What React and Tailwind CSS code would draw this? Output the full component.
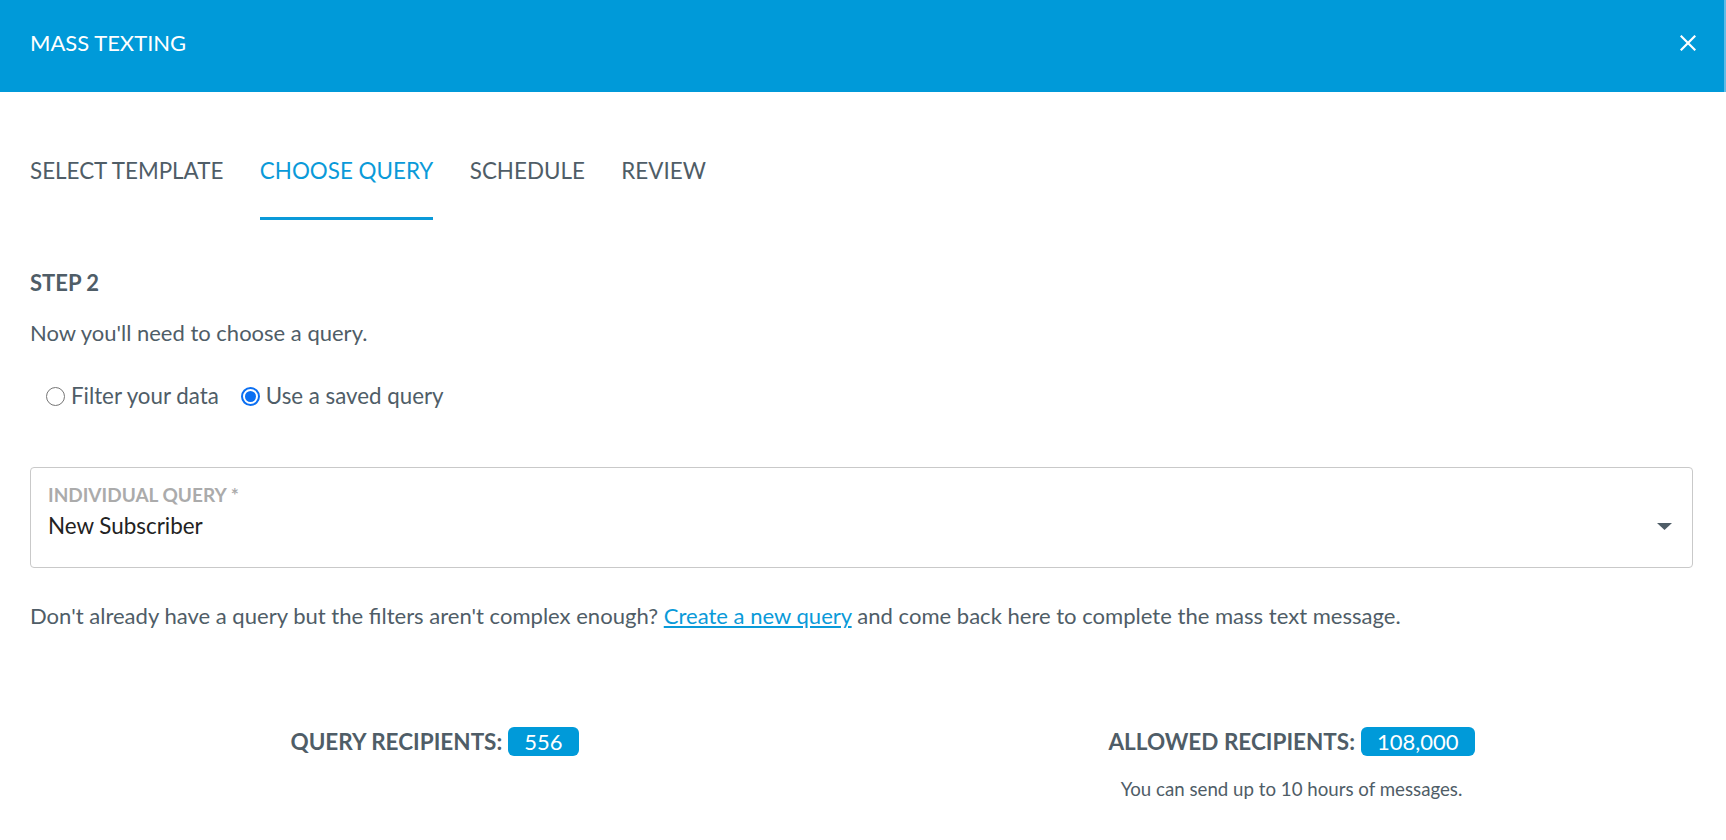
import React from "react";

function Radio({ checked }) {
  if (checked) {
    return (
      <span className="w-[19px] h-[19px] rounded-full border-[2px] border-[#0b6ff2] bg-white flex items-center justify-center shrink-0">
        <span className="w-[11px] h-[11px] rounded-full bg-[#0b6ff2]" />
      </span>
    );
  }
  return <span className="w-[19px] h-[19px] rounded-full border-[1.5px] border-[#767676] bg-white shrink-0" />;
}

function Tab({ label, active }) {
  return (
    <div
      className={
        "text-[22.4px] leading-[22px] pb-[35px] border-b-[3px] " +
        (active ? "text-[#0a9ad9] border-[#0a9ad9]" : "text-[#4f5d67] border-transparent")
      }
    >
      {label}
    </div>
  );
}

function Stat({ label, value, note }) {
  return (
    <div className="flex flex-col items-center">
      <div className="flex items-center gap-[6px]">
        <span className="font-bold text-[22.5px] leading-[29px] text-[#4f5d67]">{label}</span>
        <span className="h-[29px] px-[16px] rounded-[6px] bg-[#009ad9] text-white text-[22px] leading-[29px]">
          {value}
        </span>
      </div>
      {note && <div className="mt-[24px] text-[18.7px] leading-[18px] text-[#4f5d67]">{note}</div>}
    </div>
  );
}

export default function App() {
  return (
    <div className="w-[1726px] h-[840px] bg-white overflow-hidden font-['Lato','Noto_Sans',sans-serif] text-[#4f5d67]">
      {/* Modal header */}
      <div className="h-[92px] bg-[#009ad9] flex items-start justify-between pl-[30px] pr-[28px] border-r-[2px] border-[#5cbce8]">
        <div className="pt-[32px] text-white text-[22px] leading-[22px]">MASS TEXTING</div>
        <button className="mt-[35px] w-[16px] h-[16px] flex items-center justify-center">
          <svg width="16" height="16" viewBox="0 0 16 16">
            <path d="M1.5 1.5L14.5 14.5M14.5 1.5L1.5 14.5" stroke="white" strokeWidth="2.2" strokeLinecap="square" />
          </svg>
        </button>
      </div>

      <div className="px-[30px]">
        {/* Wizard steps */}
        <div className="mt-[68px] flex gap-[36.5px]">
          <Tab label="SELECT TEMPLATE" />
          <Tab label="CHOOSE QUERY" active />
          <Tab label="SCHEDULE" />
          <Tab label="REVIEW" />
        </div>

        <div className="mt-[52px] font-bold text-[22px] leading-[22px]">STEP 2</div>
        <div className="mt-[28px] text-[22px] leading-[22px]">Now you'll need to choose a query.</div>

        <div className="mt-[41px] pl-[16px] flex items-center text-[22.3px] leading-[22px]">
          <Radio />
          <span className="ml-[6px]">Filter your data</span>
          <span className="ml-[22px]">
            <Radio checked />
          </span>
          <span className="ml-[6px]">Use a saved query</span>
        </div>

        {/* Saved query select */}
        <div className="mt-[60px] w-[1663px] h-[101px] border border-[#c9c9c9] rounded-[4px] relative pl-[17px] pt-[17px]">
          <div className="font-bold text-[19px] leading-[19px] text-[#ababab]">INDIVIDUAL QUERY *</div>
          <div className="mt-[11px] text-[22.4px] leading-[22px] text-[#222222]">New Subscriber</div>
          <svg className="absolute right-[20px] top-[55px]" width="15" height="7" viewBox="0 0 15 7">
            <path d="M0 0H15L7.5 7Z" fill="#4f5d67" />
          </svg>
        </div>

        <div className="mt-[37px] text-[22.05px] leading-[22px]">
          Don't already have a query but the filters aren't complex enough?{" "}
          <a href="#" className="text-[#0a9ad9] underline">Create a new query</a> and come back here to complete the
          mass text message.
        </div>
      </div>

      {/* Recipient counts */}
      <div className="mt-[100px] mx-[6px] grid grid-cols-2">
        <Stat label="QUERY RECIPIENTS:" value="556" />
        <Stat label="ALLOWED RECIPIENTS:" value="108,000" note="You can send up to 10 hours of messages." />
      </div>
    </div>
  );
}
